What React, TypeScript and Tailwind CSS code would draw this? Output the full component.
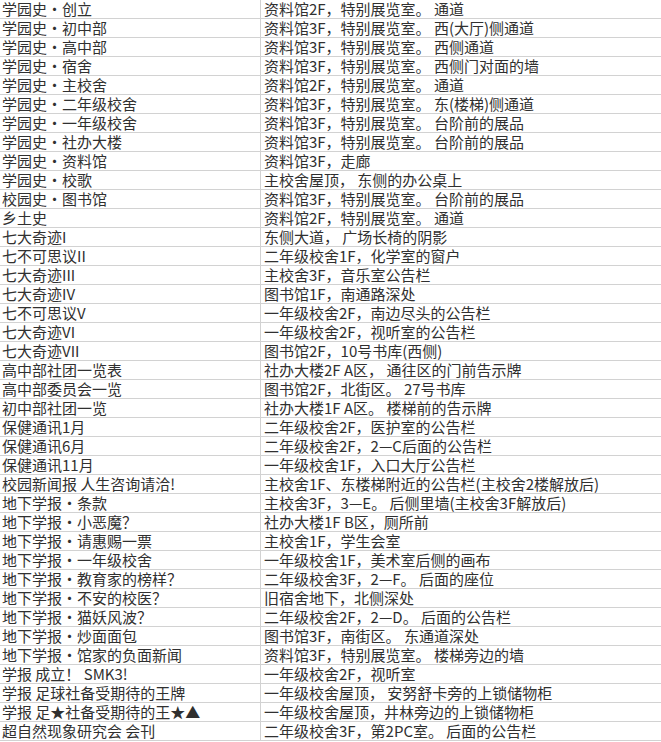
import React from "react";

const rows: [string, string][] = [
  ["学园史・创立", "资料馆2F，特别展览室。 通道"],
  ["学园史・初中部", "资料馆3F，特别展览室。 西(大厅)侧通道"],
  ["学园史・高中部", "资料馆3F，特别展览室。 西侧通道"],
  ["学园史・宿舍", "资料馆3F，特别展览室。 西侧门对面的墙"],
  ["学园史・主校舍", "资料馆2F，特别展览室。 通道"],
  ["学园史・二年级校舍", "资料馆3F，特别展览室。 东(楼梯)侧通道"],
  ["学园史・一年级校舍", "资料馆3F，特别展览室。 台阶前的展品"],
  ["学园史・社办大楼", "资料馆3F，特别展览室。 台阶前的展品"],
  ["学园史・资料馆", "资料馆3F，走廊"],
  ["学园史・校歌", "主校舍屋顶， 东侧的办公桌上"],
  ["校园史・图书馆", "资料馆3F，特别展览室。 台阶前的展品"],
  ["乡土史", "资料馆2F，特别展览室。 通道"],
  ["七大奇迹I", "东侧大道， 广场长椅的阴影"],
  ["七不可思议II", "二年级校舍1F，化学室的窗户"],
  ["七大奇迹III", "主校舍3F，音乐室公告栏"],
  ["七大奇迹IV", "图书馆1F，南通路深处"],
  ["七不可思议V", "一年级校舍2F，南边尽头的公告栏"],
  ["七大奇迹VI", "一年级校舍2F，视听室的公告栏"],
  ["七大奇迹VII", "图书馆2F，10号书库(西侧)"],
  ["高中部社团一览表", "社办大楼2F A区， 通往区的门前告示牌"],
  ["高中部委员会一览", "图书馆2F，北街区。 27号书库"],
  ["初中部社团一览", "社办大楼1F A区。 楼梯前的告示牌"],
  ["保健通讯1月", "二年级校舍2F，医护室的公告栏"],
  ["保健通讯6月", "二年级校舍2F，2—C后面的公告栏"],
  ["保健通讯11月", "一年级校舍1F，入口大厅公告栏"],
  ["校园新闻报 人生咨询请洽!", "主校舍1F、东楼梯附近的公告栏(主校舍2楼解放后)"],
  ["地下学报・条款", "主校舍3F，3—E。 后侧里墙(主校舍3F解放后)"],
  ["地下学报・小恶魔？", "社办大楼1F B区，厕所前"],
  ["地下学报・请惠赐一票", "主校舍1F，学生会室"],
  ["地下学报・一年级校舍", "一年级校舍1F，美术室后侧的画布"],
  ["地下学报・教育家的榜样？", "二年级校舍3F，2—F。 后面的座位"],
  ["地下学报・不安的校医？", "旧宿舍地下，北侧深处"],
  ["地下学报・猫妖风波？", "二年级校舍2F，2—D。 后面的公告栏"],
  ["地下学报・炒面面包", "图书馆3F，南街区。 东通道深处"],
  ["地下学报・馆家的负面新闻", "资料馆3F，特别展览室。 楼梯旁边的墙"],
  ["学报 成立！ SMK3!", "一年级校舍2F，视听室"],
  ["学报 足球社备受期待的王牌", "一年级校舍屋顶， 安努舒卡旁的上锁储物柜"],
  ["学报 足★社备受期待的王★▲", "一年级校舍屋顶，井林旁边的上锁储物柜"],
  ["超自然现象研究会 会刊", "二年级校舍3F，第2PC室。 后面的公告栏"],
];

export default function App() {
  return (
    <div
      className="w-[661px] h-[742px] bg-white text-[#303030]"
      style={{ fontFamily: '"Noto Sans CJK SC", sans-serif' }}
    >
      <div className="grid grid-cols-[261px_400px]">
        {rows.map(([a, b], i) => (
          <React.Fragment key={i}>
            <div className="h-[19px] border-b border-r border-[#d2d2d2] pl-[2px] text-[15px] leading-[18px] whitespace-nowrap">
              {a}
            </div>
            <div className="h-[19px] border-b border-[#d2d2d2] pl-[3px] text-[15px] leading-[18px] whitespace-nowrap">
              {b}
            </div>
          </React.Fragment>
        ))}
      </div>
    </div>
  );
}
